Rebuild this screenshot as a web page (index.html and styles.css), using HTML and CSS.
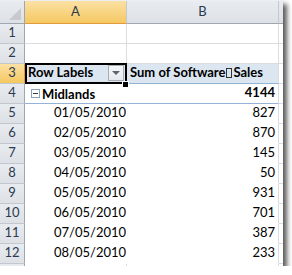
FILE: index.html
```html
<!DOCTYPE html>
<html lang="en">
<head>
  <meta charset="UTF-8" />
  <title>Pivot Table</title>
  <link rel="stylesheet" href="styles.css">
</head>
<body>
  <div class="frame">
    <div class="sheet">
      <!-- column headers -->
      <div class="hd corner"><span class="corner-tri"></span></div>
      <div class="hd col active">A</div>
      <div class="hd col">B</div>
      <div class="hd col"></div>

      <div class="hd rn">1</div><div class="c"></div><div class="c"></div><div class="c"></div>
      <div class="hd rn">2</div><div class="c"></div><div class="c"></div><div class="c"></div>

      <div class="hd rn active">3</div>
      <div class="c pv-head selected">
        <span class="bold">Row Labels</span>
        <span class="dropdown"><span class="tri"></span></span>
      </div>
      <div class="c pv-head"><span class="bold">Sum of Software<span class="glyph-box"></span>Sales</span></div>
      <div class="c"></div>

      <div class="hd rn">4</div>
      <div class="c pv-group"><span class="minus"></span><span class="bold">Midlands</span></div>
      <div class="c pv-group num bold">4144</div>
      <div class="c"></div>

      <div class="hd rn">5</div><div class="c pv date">01/05/2010</div><div class="c pv num">827</div><div class="c"></div>
      <div class="hd rn">6</div><div class="c pv date">02/05/2010</div><div class="c pv num">870</div><div class="c"></div>
      <div class="hd rn">7</div><div class="c pv date">03/05/2010</div><div class="c pv num">145</div><div class="c"></div>
      <div class="hd rn">8</div><div class="c pv date">04/05/2010</div><div class="c pv num">50</div><div class="c"></div>
      <div class="hd rn">9</div><div class="c pv date">05/05/2010</div><div class="c pv num">931</div><div class="c"></div>
      <div class="hd rn">10</div><div class="c pv date">06/05/2010</div><div class="c pv num">701</div><div class="c"></div>
      <div class="hd rn">11</div><div class="c pv date">07/05/2010</div><div class="c pv num">387</div><div class="c"></div>
      <div class="hd rn">12</div><div class="c pv date">08/05/2010</div><div class="c pv num">233</div><div class="c"></div>
      <!-- row 13 is only a sliver at the bottom edge -->
      <div class="hd rn"></div><div class="c"></div><div class="c"></div><div class="c"></div>
    </div>
  </div>
</body>
</html>
```

FILE: styles.css
```css
body {
  margin: 0;
  background: #fff;
}

/* outer picture frame with drop shadow */
.frame {
  width: 283px;
  height: 266px;
  box-sizing: border-box;
  overflow: hidden;
  border-top: 1px solid #eceef1;
  box-shadow: 4px 4px 5px rgba(0, 0, 0, 0.65);
}

.sheet {
  display: grid;
  grid-template-columns: 25px 102px 152px 30px;
  grid-template-rows: 23px repeat(13, 20px);
  font-family: Lato, "Liberation Sans", sans-serif;
  font-size: 13px;
  color: #000;
}

/* headers */
.hd {
  box-sizing: border-box;
  background: linear-gradient(#e8ebef, #dde1e6);
  border-right: 1px solid #c3c8ce;
  border-bottom: 1px solid #c3c8ce;
  color: #2b3a4f;
  display: flex;
  align-items: flex-end;
  justify-content: center;
  padding-bottom: 3px;
}

.hd.col {
  border-bottom-color: #9ea6b0;
  padding-bottom: 4px;
}

.hd.rn {
  border-right-color: #9ea6b0;
}

.hd.active {
  background: linear-gradient(#fbe1a3, #f5c862);
}

.hd.col.active {
  border-bottom-color: #e39a3c;
}

.hd.rn.active {
  border-right-color: #e39a3c;
}

.corner {
  position: relative;
  border-right-color: #9ea6b0;
  border-bottom-color: #9ea6b0;
}

.corner-tri {
  position: absolute;
  right: 3px;
  bottom: 3px;
  width: 0;
  height: 0;
  border-left: 12px solid transparent;
  border-bottom: 12px solid #c6cacf;
}

/* cells */
.c {
  box-sizing: border-box;
  border-right: 1px solid #dadcdd;
  border-bottom: 1px solid #dadcdd;
  display: flex;
  align-items: flex-end;
  padding: 0 3px 3px;
  white-space: nowrap;
  overflow: hidden;
}

.bold {
  font-weight: bold;
}

.num {
  justify-content: flex-end;
}

.pv-head {
  background: #dce6f1;
  border-bottom-color: #95b3d7;
  overflow: visible;
}

.pv-group {
  border-bottom-color: #95b3d7;
}

.pv-group:not(.num) {
  border-right-color: #fff;
  padding-left: 6px;
  align-items: center;
  padding-bottom: 0;
}

.pv-group.num {
  padding-right: 3px;
}

.pv {
  border-bottom-color: #fff;
}

.pv.date {
  border-right-color: #fff;
  padding-left: 29px;
}

/* active cell A3 */
.selected {
  position: relative;
}

.selected::after {
  content: "";
  position: absolute;
  top: -1px;
  left: 0;
  right: -1px;
  bottom: -1px;
  border: 2px solid #000;
  pointer-events: none;
}

.selected::before {
  content: "";
  position: absolute;
  right: -3px;
  bottom: -5px;
  width: 5px;
  height: 5px;
  background: #000;
  border: 1px solid #fff;
  z-index: 2;
}

.dropdown {
  margin-left: auto;
  margin-bottom: -1px;
  margin-right: -1px;
  width: 16px;
  height: 16px;
  box-sizing: border-box;
  border: 1px solid #a8adb4;
  background: linear-gradient(#f7f8fa, #e6e9ed);
  display: flex;
  align-items: center;
  justify-content: center;
}

.tri {
  width: 0;
  height: 0;
  border-left: 4px solid transparent;
  border-right: 4px solid transparent;
  border-top: 4px solid #5b6470;
}

.glyph-box {
  display: inline-block;
  width: 6px;
  height: 10px;
  box-sizing: border-box;
  border: 1px solid #333;
  margin: 0 1px;
  vertical-align: -1px;
}

.minus {
  width: 9px;
  height: 9px;
  box-sizing: border-box;
  border: 1px solid #8aa0c0;
  background: #fff;
  margin-right: 2px;
  display: flex;
  align-items: center;
  justify-content: center;
}

.minus::before {
  content: "";
  width: 5px;
  height: 1px;
  background: #2b3a4f;
}
```
